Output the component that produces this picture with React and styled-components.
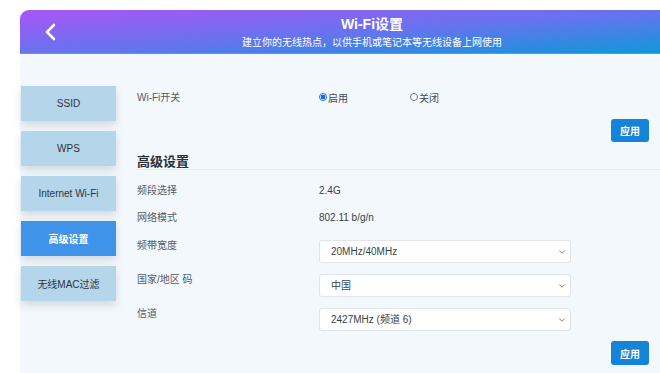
import styled, { createGlobalStyle } from 'styled-components';
import { ChevronDown } from 'lucide-react';

const GlobalStyle = createGlobalStyle`
  html, body {
    margin: 0;
    padding: 0;
    background: #ffffff;
    overflow: hidden;
  }
  body {
    font-family: "Liberation Sans", "Noto Sans CJK SC", sans-serif;
  }
  * {
    box-sizing: border-box;
  }
`;

const tabs = ['SSID', 'WPS', 'Internet Wi-Fi', '高级设置', '无线MAC过滤'];

const selects = [
  { label: '频带宽度', value: '20MHz/40MHz' },
  { label: '国家/地区 码', value: '中国' },
  { label: '信道', value: '2427MHz (频道 6)' },
];

const App = () => {
  return (
    <>
      <GlobalStyle />
      <Page>
        <Header>
          <BackButton aria-label="返回">
            <svg width="14" height="20" viewBox="0 0 14 20">
              <polyline
                points="10,3 3,10 10,17"
                fill="none"
                stroke="#fff"
                strokeWidth="2.6"
                strokeLinecap="round"
                strokeLinejoin="round"
              />
            </svg>
          </BackButton>
          <TitleBlock>
            <h1>Wi-Fi设置</h1>
            <p>建立你的无线热点，以供手机或笔记本等无线设备上网使用</p>
          </TitleBlock>
        </Header>

        <Panel>
          <Sidebar>
            {tabs.map((t) => (
              <Tab key={t} $active={t === '高级设置'}>
                {t}
              </Tab>
            ))}
          </Sidebar>

          <Main>
            <SwitchRow>
              <Label>Wi-Fi开关</Label>
              <RadioGroup>
                <Radio>
                  <Dot $checked />
                  启用
                </Radio>
                <Radio>
                  <Dot />
                  关闭
                </Radio>
              </RadioGroup>
            </SwitchRow>
            <ApplyRow>
              <ApplyButton>应用</ApplyButton>
            </ApplyRow>

            <Heading>高级设置</Heading>

            <InfoList>
              <InfoRow>
                <Label>频段选择</Label>
                <Value>2.4G</Value>
              </InfoRow>
              <InfoRow>
                <Label>网络模式</Label>
                <Value>802.11 b/g/n</Value>
              </InfoRow>
            </InfoList>

            <SelectList>
              {selects.map((s) => (
                <SelectRow key={s.label}>
                  <Label>{s.label}</Label>
                  <SelectWrap>
                    <Select defaultValue={s.value}>
                      <option>{s.value}</option>
                    </Select>
                    <Chevron size={10} strokeWidth={2} />
                  </SelectWrap>
                </SelectRow>
              ))}
            </SelectList>

            <ApplyRow $bottom>
              <ApplyButton $tall>应用</ApplyButton>
            </ApplyRow>
          </Main>
        </Panel>
      </Page>
    </>
  );
};

const Page = styled.div`
  width: 640px;
  margin-left: 20px;
  padding-top: 10px;
`;

const Header = styled.header`
  position: relative;
  height: 44px;
  border-radius: 9px 0 0 0;
  background: linear-gradient(to bottom right, #a956f6 0%, #6673ef 52%, #0f98d8 100%);
  border-bottom: 1px solid #3aa6e2;
  display: flex;
  align-items: flex-start;
  justify-content: center;
`;

const BackButton = styled.button`
  position: absolute;
  left: 24px;
  top: 12px;
  width: 14px;
  height: 20px;
  padding: 0;
  border: none;
  background: transparent;
  display: flex;
`;

const TitleBlock = styled.div`
  text-align: center;
  color: #ffffff;
  padding-top: 5px;
  margin-left: 64px;

  h1 {
    margin: 0;
    font-size: 14px;
    line-height: 18px;
    font-weight: 700;
  }

  p {
    margin: 3px 0 0;
    font-size: 10px;
    line-height: 14px;
  }
`;

const Panel = styled.div`
  background: #f3f8fc;
  min-height: 330px;
  display: flex;
  padding-left: 1px;
`;

const Sidebar = styled.nav`
  width: 95px;
  padding-top: 32px;
  display: flex;
  flex-direction: column;
  gap: 10px;
`;

const Tab = styled.div`
  height: 35px;
  display: flex;
  align-items: center;
  justify-content: center;
  font-size: 10px;
  color: ${(p) => (p.$active ? '#ffffff' : '#2d3440')};
  font-weight: ${(p) => (p.$active ? 700 : 400)};
  background: ${(p) => (p.$active ? '#3f94ea' : '#b5d5ea')};
  box-shadow: 0 4px 8px rgba(60, 80, 100, 0.18);
`;

const Main = styled.main`
  flex: 1;
  margin-left: 21px;
  padding: 32px 11px 0 0;
  display: flex;
  flex-direction: column;
`;

const Label = styled.span`
  width: 182px;
  flex-shrink: 0;
  font-size: 10px;
  line-height: 11px;
  color: #555b63;
`;

const SwitchRow = styled.div`
  height: 22px;
  display: flex;
  align-items: center;
`;

const RadioGroup = styled.div`
  display: flex;
  align-items: center;
`;

const Radio = styled.label`
  width: 91px;
  display: flex;
  align-items: center;
  font-size: 10px;
  color: #444a52;
`;

const Dot = styled.span`
  width: 8px;
  height: 8px;
  border-radius: 50%;
  border: 1px solid ${(p) => (p.$checked ? '#1a6fe0' : '#777')};
  background: ${(p) => (p.$checked ? 'radial-gradient(circle, #1a6fe0 0 2.2px, #ffffff 2.6px)' : '#ffffff')};
  margin-right: 1px;
`;

const ApplyRow = styled.div`
  display: flex;
  justify-content: flex-end;
  margin-top: ${(p) => (p.$bottom ? '10px' : '11px')};
`;

const ApplyButton = styled.button`
  width: 38px;
  height: ${(p) => (p.$tall ? '24px' : '23px')};
  padding: 0;
  border: none;
  border-radius: 3px;
  background: #1584d8;
  color: #ffffff;
  font-family: inherit;
  font-size: 10px;
  font-weight: 700;
`;

const Heading = styled.h2`
  margin: 12px -11px 0 0;
  height: 16px;
  font-size: 13px;
  line-height: 15px;
  font-weight: 700;
  color: #2b3038;
  border-bottom: 1px solid #e6edf2;
`;

const InfoList = styled.div`
  margin-top: 7px;
  display: flex;
  flex-direction: column;
`;

const InfoRow = styled.div`
  height: 27px;
  display: flex;
  align-items: center;
`;

const Value = styled.span`
  font-size: 10px;
  color: #3a3f46;
`;

const SelectList = styled.div`
  margin-top: 9px;
  display: flex;
  flex-direction: column;
  gap: 11px;
`;

const SelectRow = styled.div`
  display: flex;
  align-items: flex-start;
`;

const SelectWrap = styled.div`
  position: relative;
  width: 252px;
`;

const Select = styled.select`
  appearance: none;
  width: 100%;
  height: 23px;
  padding: 0 0 0 11px;
  border: 1px solid #dfe5ea;
  border-radius: 3px;
  background: #ffffff;
  font-family: inherit;
  font-size: 10px;
  color: #3a3f46;
  outline: none;
`;

const Chevron = styled(ChevronDown)`
  position: absolute;
  right: 4px;
  top: 7px;
  color: #666;
  pointer-events: none;
`;

export default App;
